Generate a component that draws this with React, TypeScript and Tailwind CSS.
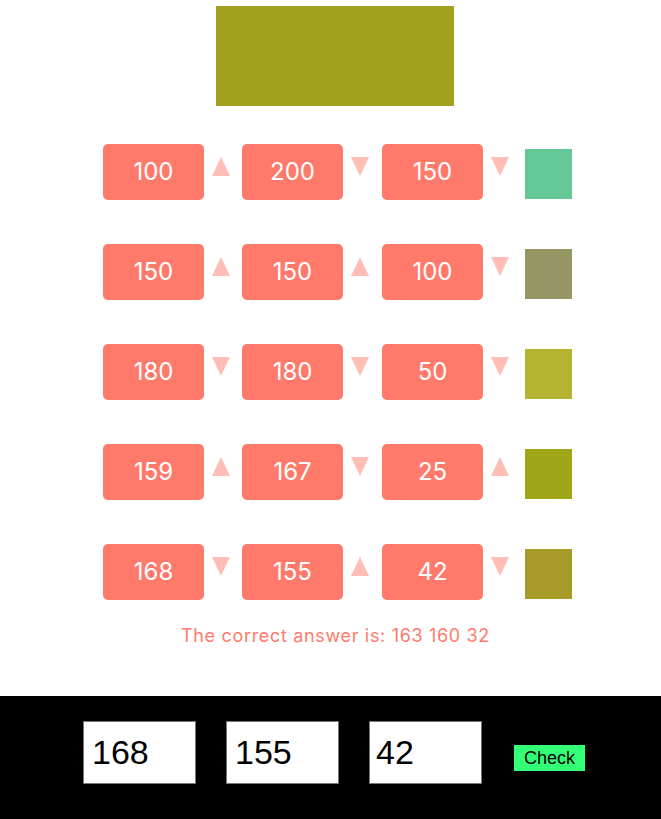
import React from "react";

const rows = [
  { v: [100, 200, 150], a: ["up", "down", "down"], c: "#64c896" },
  { v: [150, 150, 100], a: ["up", "up", "down"], c: "#969664" },
  { v: [180, 180, 50], a: ["down", "down", "down"], c: "#b4b432" },
  { v: [159, 167, 25], a: ["up", "down", "up"], c: "#9fa719" },
  { v: [168, 155, 42], a: ["down", "up", "down"], c: "#a89b2a" },
];

function Arrow({ dir }: { dir: string }) {
  return (
    <svg width="18" height="19" viewBox="0 0 18 19" className="mt-[13px] shrink-0">
      {dir === "up" ? (
        <polygon points="9,0 18,19 0,19" fill="#ffbdb5" />
      ) : (
        <polygon points="0,0 18,0 9,19" fill="#ffbdb5" />
      )}
    </svg>
  );
}

function Tile({ n }: { n: number }) {
  return (
    <div className="w-[101px] h-[56px] shrink-0 rounded-[5px] bg-[#ff7a6b] flex items-center justify-center text-white text-[24px] font-[Inter,sans-serif]">
      {n}
    </div>
  );
}

export default function App() {
  return (
    <div className="w-[661px] h-[819px] bg-white flex flex-col font-[Inter,sans-serif]">
      <div className="ml-[216px] mt-[6px] w-[238px] h-[100px] bg-[#a3a020]" />
      <div className="mt-[38px] flex flex-col gap-[44px] pl-[103px]">
        {rows.map((r, i) => (
          <div key={i} className="flex items-start h-[56px]">
            <Tile n={r.v[0]} />
            <div className="ml-[8px] mr-[12px]"><Arrow dir={r.a[0]} /></div>
            <Tile n={r.v[1]} />
            <div className="ml-[8px] mr-[13px]"><Arrow dir={r.a[1]} /></div>
            <Tile n={r.v[2]} />
            <div className="ml-[8px] mr-[16px]"><Arrow dir={r.a[2]} /></div>
            <div className="mt-[5px] w-[47px] h-[50px]" style={{ backgroundColor: r.c }} />
          </div>
        ))}
      </div>
      <div className="mt-[24px] pl-[181px] text-[18px] leading-[24px] tracking-[0.67px] text-[#ff7a6b] w-[661px] whitespace-nowrap">
        The correct answer is: 163 160 32
      </div>
      <div className="mt-auto h-[123px] bg-black flex items-start pt-[25px] pl-[83px] font-['Liberation_Sans',Arial,sans-serif]">
        <input
          readOnly
          value="168"
          className="w-[113px] h-[63px] bg-white border border-[#767676] px-[8px] text-[34px] text-black outline-none"
        />
        <input
          readOnly
          value="155"
          className="ml-[30px] w-[113px] h-[63px] bg-white border border-[#767676] px-[8px] text-[34px] text-black outline-none"
        />
        <input
          readOnly
          value="42"
          className="ml-[30px] w-[113px] h-[63px] bg-white border border-[#767676] px-[6px] text-[34px] text-black outline-none"
        />
        <button className="ml-[32px] mt-[24px] w-[71px] h-[26px] bg-[#33ff77] text-black text-[18px] leading-[26px]">
          Check
        </button>
      </div>
    </div>
  );
}
